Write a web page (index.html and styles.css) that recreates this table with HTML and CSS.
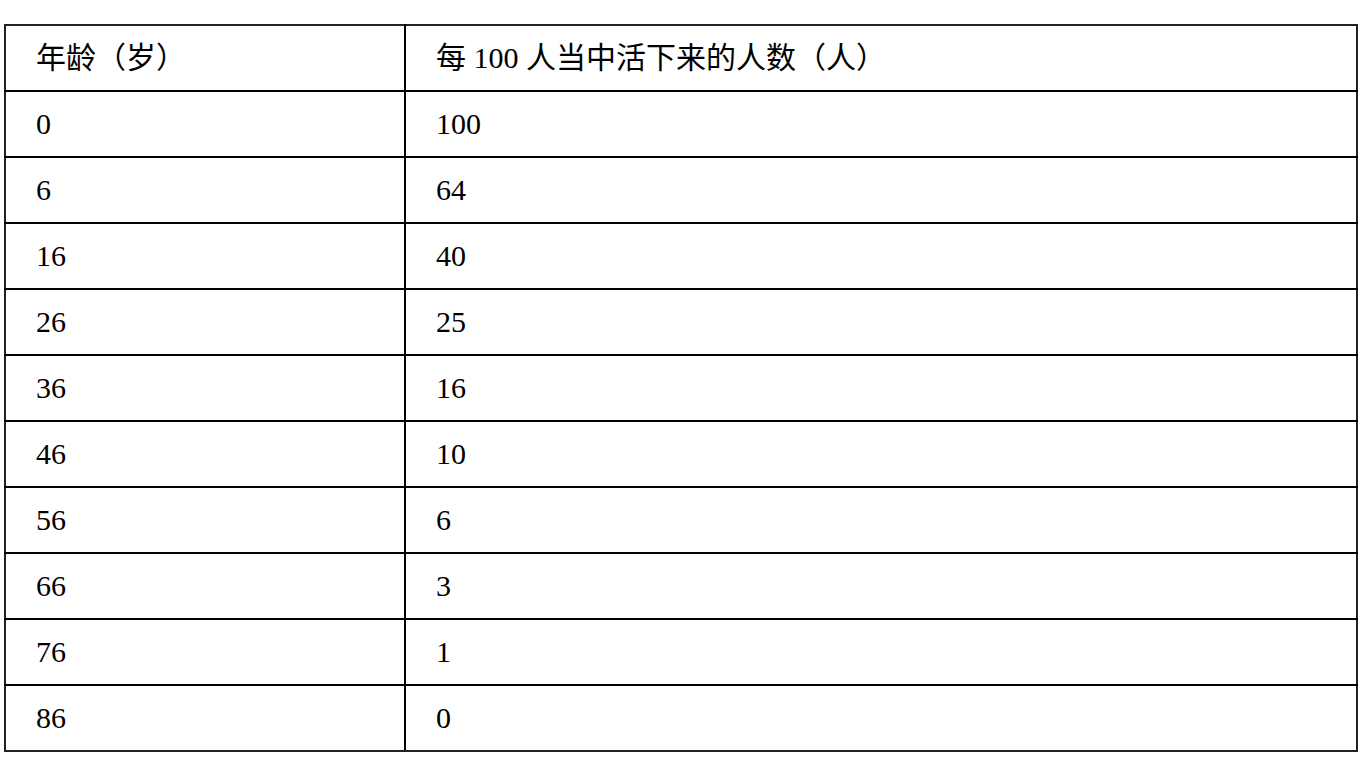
FILE: index.html
```html
<!DOCTYPE html>
<html lang="zh">
<head>
<meta charset="utf-8">
<link rel="stylesheet" href="styles.css">
</head>
<body>
<table class="life">
<tr><td class="c1">年龄（岁）</td><td>每 100 人当中活下来的人数（人）</td></tr>
<tr><td class="c1">0</td><td>100</td></tr>
<tr><td class="c1">6</td><td>64</td></tr>
<tr><td class="c1">16</td><td>40</td></tr>
<tr><td class="c1">26</td><td>25</td></tr>
<tr><td class="c1">36</td><td>16</td></tr>
<tr><td class="c1">46</td><td>10</td></tr>
<tr><td class="c1">56</td><td>6</td></tr>
<tr><td class="c1">66</td><td>3</td></tr>
<tr><td class="c1">76</td><td>1</td></tr>
<tr><td class="c1">86</td><td>0</td></tr>
</table>
</body>
</html>
```
FILE: styles.css
```css
html, body {
  margin: 0;
  padding: 0;
  background: #fff;
}
body {
  padding: 24px 0 0 4px;
}
.life {
  border-collapse: collapse;
  width: 1354px;
  border: 2px solid #222;
  font-family: "Liberation Serif", "Noto Sans CJK SC", serif;
  font-size: 30px;
  color: #000;
  text-spacing-trim: space-all;
}
.life td {
  height: 66px;
  padding: 0 0 0 30px;
  border: 2px solid #000;
  vertical-align: middle;
  box-sizing: border-box;
  line-height: 1;
}
.life tr:first-child td { border-top-color: #222; }
.life tr:last-child td { border-bottom-color: #222; }
.life td:last-child { border-right-color: #222; }
.life td.c1 { width: 400px; border-left-color: #222; }
```
